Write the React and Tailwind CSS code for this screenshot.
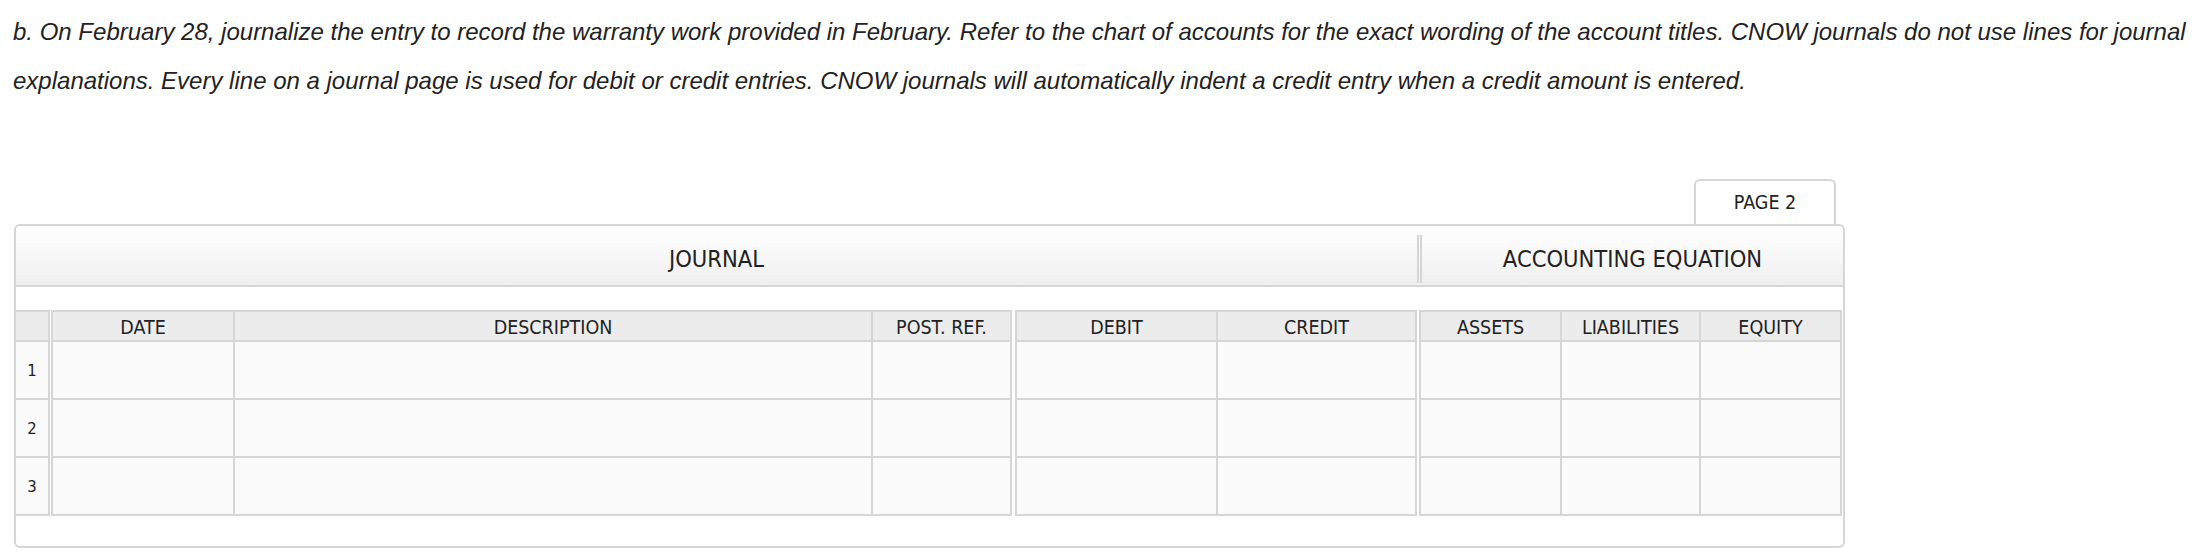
import React from "react";

const sans = { fontFamily: '"DejaVu Sans Condensed", "DejaVu Sans", sans-serif' };

const rows = [1, 2, 3];

const HeadCell = ({ w, children }) => (
  <div className={`${w} h-[30px] shrink-0 border-r-2 border-b-2 border-[#d6d6d6] bg-[#ececec] flex items-center justify-center pt-[3px] text-[19.5px] text-[#222]`}>
    {children}
  </div>
);

const Cell = ({ w, children }) => (
  <div className={`${w} h-[58px] shrink-0 border-r-2 border-b-2 border-[#d6d6d6] bg-[#fafafa] flex items-center justify-center pt-[2px] text-[16.5px] text-[#222]`}>
    {children}
  </div>
);

// one column group of the journal grid, drawn with its own left edge
const Group = ({ cols, left = true, className = "" }) => (
  <div className={`flex flex-col border-t-2 border-[#d6d6d6] ${left ? "border-l-2" : ""} ${className}`}>
    <div className="flex">
      {cols.map((c, i) => (
        <HeadCell key={i} w={c.w}>{c.label}</HeadCell>
      ))}
    </div>
    {rows.map((r) => (
      <div key={r} className="flex">
        {cols.map((c, i) => (
          <Cell key={i} w={c.w}>{c.num ? r : null}</Cell>
        ))}
      </div>
    ))}
  </div>
);

export default function App() {
  return (
    <div className="w-[2208px] h-[553px] overflow-hidden bg-white">
      <p
        className="pl-[13px] pt-[7px] text-[24px] leading-[49px] italic text-[#222]"
        style={{ fontFamily: '"Liberation Sans", Arial, sans-serif' }}
      >
        b. On February 28, journalize the entry to record the warranty work provided in February. Refer to the chart of accounts for the exact wording of the account titles. CNOW journals do not use lines for journal
        <br />
        explanations. Every line on a journal page is used for debit or credit entries. CNOW journals will automatically indent a credit entry when a credit amount is entered.
      </p>

      <div className="ml-[14px] mt-[74px] w-[1831px]" style={sans}>
        {/* page tab */}
        <div className="flex justify-end pr-[9px]">
          <div className="w-[142px] h-[45px] border-2 border-b-0 border-[#d6d6d6] rounded-t-[6px] bg-white flex items-center justify-center text-[19.5px] text-[#222]">
            PAGE 2
          </div>
        </div>

        <div className="border-2 border-[#d6d6d6] rounded-[6px] bg-white h-[324px]">
          {/* title band */}
          <div className="h-[61px] flex border-b-2 border-[#d6d6d6] bg-linear-to-b from-white to-[#efefef] rounded-t-[5px]">
            <div className="w-[1401px] flex items-center justify-center pt-[8px] text-[23.5px] text-[#222]">
              JOURNAL
            </div>
            <div className="w-[5px] h-[48px] self-end mb-[2px] border-x-2 border-[#d6d6d6]" />
            <div className="flex-1 flex items-center justify-center pt-[8px] text-[23.5px] text-[#222]">
              ACCOUNTING EQUATION
            </div>
          </div>

          {/* grid */}
          <div className="flex mt-[23px]">
            <Group left={false} cols={[{ w: "w-[34px]", num: true }]} />
            <Group
              className="ml-[1px]"
              cols={[
                { w: "w-[182px]", label: "DATE" },
                { w: "w-[638px]", label: "DESCRIPTION" },
                { w: "w-[139px]", label: "POST. REF." },
              ]}
            />
            <Group
              className="ml-[3px]"
              cols={[
                { w: "w-[201px]", label: "DEBIT" },
                { w: "w-[199px]", label: "CREDIT" },
              ]}
            />
            <Group
              className="ml-[2px]"
              cols={[
                { w: "w-[141px]", label: "ASSETS" },
                { w: "w-[139px]", label: "LIABILITIES" },
                { w: "w-[141px]", label: "EQUITY" },
              ]}
            />
          </div>
        </div>
      </div>
    </div>
  );
}
